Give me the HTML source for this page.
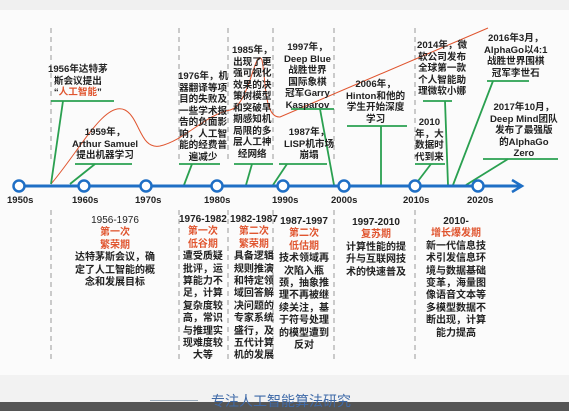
<!DOCTYPE html>
<html><head><meta charset="utf-8"><style>
body{margin:0;width:569px;height:411px;overflow:hidden;background:#fbfbfb;font-family:"Liberation Sans","Noto Sans CJK SC",sans-serif;position:relative}
.t{position:absolute;font-size:9.6px;line-height:11.5px;color:#222;text-align:center;font-weight:bold;white-space:nowrap}
.l{line-height:12.4px;font-size:10px}
.r{color:#e0552f}
.d{position:absolute;font-size:9.5px;font-weight:bold;color:#222}
</style></head><body>
<div style="position:absolute;left:0;top:0;width:569px;height:10px;background:#f0f0f0"></div>
<svg width="569" height="411" style="position:absolute;left:0;top:0">
<g stroke="#999" stroke-width="1" stroke-dasharray="5,4">
<line x1="51" y1="28" x2="51" y2="160"/><line x1="51" y1="210" x2="51" y2="360"/>
<line x1="179" y1="28" x2="179" y2="160"/><line x1="179" y1="210" x2="179" y2="360"/>
<line x1="228" y1="28" x2="228" y2="160"/><line x1="228" y1="210" x2="228" y2="360"/>
<line x1="273" y1="28" x2="273" y2="160"/><line x1="273" y1="210" x2="273" y2="360"/>
<line x1="334" y1="28" x2="334" y2="160"/><line x1="334" y1="210" x2="334" y2="360"/>
<line x1="415" y1="28" x2="415" y2="160"/><line x1="415" y1="210" x2="415" y2="360"/>
</g>
<path d="M51,184 C80,150 105,100 125,110 C140,118 140,150 160,146 C185,140 205,115 230,110 C250,105 255,45 262,60 C266,80 264,118 280,117 L488,28" fill="none" stroke="#e0552f" stroke-width="1"/>
<g stroke="#2aa050" stroke-width="1.8" fill="none">
<line x1="51" y1="101" x2="114" y2="101"/><line x1="51" y1="184" x2="63" y2="101"/>
<line x1="75" y1="164" x2="132" y2="164"/><line x1="70" y1="184" x2="95" y2="164"/>
<line x1="179" y1="164" x2="220" y2="164"/><line x1="184" y1="185" x2="192" y2="164"/>
<line x1="234" y1="164" x2="273" y2="164"/><line x1="246" y1="185" x2="252" y2="164"/>
<line x1="279" y1="164" x2="327" y2="164"/><line x1="273" y1="185" x2="287" y2="164"/>
<line x1="291" y1="109" x2="334" y2="109"/><line x1="334" y1="185" x2="320" y2="109"/>
<line x1="347" y1="126" x2="407" y2="126"/><line x1="381" y1="185" x2="381" y2="126"/>
<line x1="415" y1="164" x2="445" y2="164"/><line x1="415" y1="185" x2="431" y2="164"/>
<line x1="423" y1="101" x2="452" y2="101"/><line x1="448" y1="185" x2="445" y2="101"/>
<line x1="487" y1="81" x2="529" y2="81"/><line x1="453" y1="185" x2="493" y2="81"/>
<line x1="483" y1="159" x2="558" y2="159"/><line x1="466" y1="185" x2="508" y2="159"/>
</g>
<line x1="14" y1="186" x2="520" y2="186" stroke="#1f6fc5" stroke-width="3"/>
<path d="M512,180 L522,186 L512,192" fill="none" stroke="#1f6fc5" stroke-width="2.5"/>
<g fill="#fff" stroke="#1f6fc5" stroke-width="2.5">
<circle cx="19" cy="186" r="5.5"/><circle cx="84" cy="186" r="5.5"/><circle cx="146" cy="186" r="5.5"/><circle cx="217" cy="186" r="5.5"/><circle cx="283" cy="186" r="5.5"/><circle cx="344" cy="186" r="5.5"/><circle cx="415" cy="186" r="5.5"/><circle cx="478" cy="186" r="5.5"/>
</g>
</svg>
<div class="d" style="left:7px;top:195px">1950s</div>
<div class="d" style="left:72px;top:195px">1960s</div>
<div class="d" style="left:135px;top:195px">1970s</div>
<div class="d" style="left:204px;top:195px">1980s</div>
<div class="d" style="left:272px;top:195px">1990s</div>
<div class="d" style="left:331px;top:195px">2000s</div>
<div class="d" style="left:403px;top:195px">2010s</div>
<div class="d" style="left:467px;top:195px">2020s</div>

<div class="t" style="left:48px;top:64px">1956年达特茅<br>斯会议提出<br>“<span class="r">人工智能</span>”</div>
<div class="t" style="left:72px;top:127px">1959年，<br>Arthur Samuel<br>提出机器学习</div>
<div class="t" style="left:178px;top:71px">1976年，机<br>器翻译等项<br>目的失败及<br>一些学术报<br>告的负面影<br>响，人工智<br>能的经费普<br>遍减少</div>
<div class="t" style="left:232px;top:45px">1985年，<br>出现了更<br>强可视化<br>效果的决<br>策树模型<br>和突破早<br>期感知机<br>局限的多<br>层人工神<br>经网络</div>
<div class="t" style="left:284px;top:42px">1997年，<br>Deep Blue<br>战胜世界<br>国际象棋<br>冠军Garry<br>Kasparov</div>
<div class="t" style="left:284px;top:127px">1987年，<br>LISP机市场<br>崩塌</div>
<div class="t" style="left:346px;top:79px">2006年，<br>Hinton和他的<br>学生开始深度<br>学习</div>
<div class="t" style="left:417px;top:40px">2014年，微<br>软公司发布<br>全球第一款<br>个人智能助<br>理微软小娜</div>
<div class="t" style="left:415px;top:117px">2010<br>年，大<br>数据时<br>代到来</div>
<div class="t" style="left:484px;top:33px">2016年3月，<br>AlphaGo以4:1<br>战胜世界围棋<br>冠军李世石</div>
<div class="t" style="left:490px;top:102px">2017年10月，<br>Deep Mind团队<br>发布了最强版<br>的AlphaGo<br>Zero</div>

<div class="t l" style="left:75px;top:215px;font-weight:normal">1956-1976<br><b class="r">第一次</b><br><b class="r">繁荣期</b><br><b>达特茅斯会议，确<br>定了人工智能的概<br>念和发展目标</b></div>
<div class="t l" style="left:179px;top:214px">1976-1982<br><span class="r">第一次</span><br><span class="r">低谷期</span><br>遭受质疑<br>批评，运<br>算能力不<br>足，计算<br>复杂度较<br>高，常识<br>与推理实<br>现难度较<br>大等</div>
<div class="t l" style="left:230px;top:214px">1982-1987<br><span class="r">第二次</span><br><span class="r">繁荣期</span><br>具备逻辑<br>规则推演<br>和特定领<br>域回答解<br>决问题的<br>专家系统<br>盛行，及<br>五代计算<br>机的发展</div>
<div class="t l" style="left:279px;top:216px">1987-1997<br><span class="r">第二次</span><br><span class="r">低估期</span><br>技术领域再<br>次陷入瓶<br>颈，抽象推<br>理不再被继<br>续关注，基<br>于符号处理<br>的模型遭到<br>反对</div>
<div class="t l" style="left:346px;top:217px">1997-2010<br><span class="r">复苏期</span><br>计算性能的提<br>升与互联网技<br>术的快速普及</div>
<div class="t l" style="left:426px;top:216px">2010-<br><span class="r">增长爆发期</span><br>新一代信息技<br>术引发信息环<br>境与数据基础<br>变革，海量图<br>像语音文本等<br>多模型数据不<br>断出现，计算<br>能力提高</div>

<div style="position:absolute;left:0;top:375px;width:569px;height:27px;background:#f2f2f2"></div>
<div style="position:absolute;left:0;top:402px;width:569px;height:9px;background:#555"></div>
<div style="position:absolute;left:150px;top:400px;width:48px;height:1px;background:#9ab"></div>
<div style="position:absolute;left:211px;top:392px;font-size:14px;line-height:18px;color:#3f6aa8;white-space:nowrap">专注人工智能算法研究</div>
</body></html>
